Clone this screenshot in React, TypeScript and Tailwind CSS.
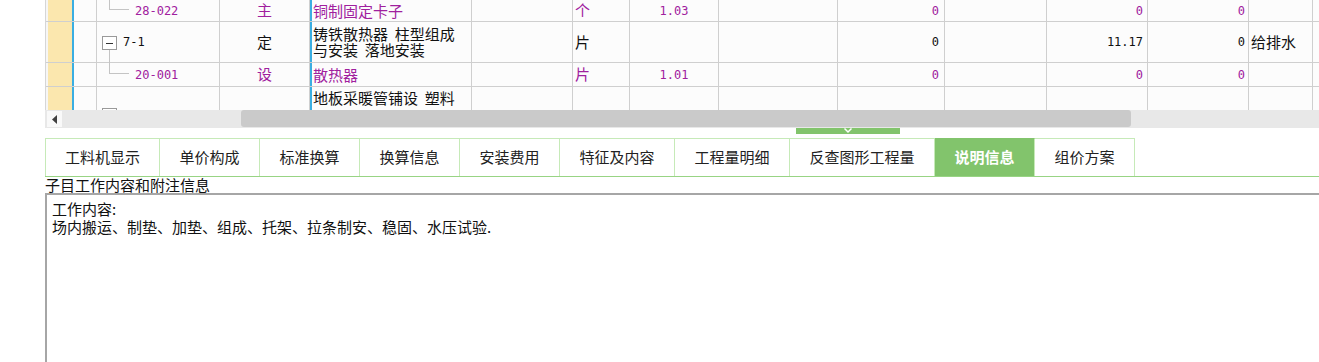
// Quota grid (clipped) with horizontal scrollbar, splitter handle, detail tabs and
// the "说明信息" panel showing the work content of the selected item.

const CJK = { fontFamily: '"Noto Sans CJK SC", "Noto Sans", sans-serif' };
const MONO = { fontFamily: '"DejaVu Sans Mono", "Liberation Mono", monospace' };

// column widths, each including its 1px right border
const W = [23, 123, 91, 160, 101, 57, 89, 119, 107, 102, 101, 101, 64];

type Row = {
  h: number;
  purple: boolean;
  code: string;
  tree: "childTop" | "parent" | "childBottom" | "parentNext";
  type: string;
  name: React.ReactNode;
  nameTop?: boolean;
  unit: string;
  qty: string;
  c9: string;
  c11: string;
  c12: string;
  c13: string;
};

const ROWS: Row[] = [
  { h: 22, purple: true, code: "28-022", tree: "childTop", type: "主", name: "铜制固定卡子", unit: "个", qty: "1.03", c9: "0", c11: "0", c12: "0", c13: "" },
  {
    h: 41, purple: false, code: "7-1", tree: "parent", type: "定",
    name: (<>铸铁散热器&nbsp;&nbsp;柱型组成<br />与安装&nbsp;&nbsp;落地安装</>),
    unit: "片", qty: "", c9: "0", c11: "11.17", c12: "0", c13: "给排水",
  },
  { h: 24, purple: true, code: "20-001", tree: "childBottom", type: "设", name: "散热器", unit: "片", qty: "1.01", c9: "0", c11: "0", c12: "0", c13: "" },
  {
    h: 41, purple: false, code: "", tree: "parentNext", type: "",
    name: (<>地板采暖管铺设&nbsp;&nbsp;塑料</>), nameTop: true,
    unit: "", qty: "", c9: "", c11: "", c12: "", c13: "",
  },
];

const TABS = ["工料机显示", "单价构成", "标准换算", "换算信息", "安装费用", "特征及内容", "工程量明细", "反查图形工程量", "说明信息", "组价方案"];
const TAB_W = [115, 100, 100, 100, 100, 115, 115, 145, 100, 100];

function MinusBox() {
  return (
    <div className="w-[15px] h-[14px] border border-[#9a9a9a] bg-white flex items-center justify-center">
      <div className="w-[7px] h-px bg-[#333]" />
    </div>
  );
}

function TreeCell({ row }: { row: Row }) {
  const color = row.purple ? "text-[#a0209e]" : "text-[#111]";
  return (
    <div className="relative h-full border-r border-[#cfcfcf]" style={{ width: W[1] }}>
      {row.tree === "childTop" && (
        <>
          <div className="absolute left-[12px] top-0 h-[10px] w-px bg-[#c4c4c4]" />
          <div className="absolute left-[12px] top-[9px] w-[20px] h-px bg-[#c4c4c4]" />
        </>
      )}
      {row.tree === "parent" && (
        <>
          <div className="absolute left-[5px] top-[14px]"><MinusBox /></div>
          <div className="absolute left-[12px] top-[28px] bottom-[-1px] w-px bg-[#c4c4c4]" />
        </>
      )}
      {row.tree === "childBottom" && (
        <>
          <div className="absolute left-[12px] top-0 h-[11px] w-px bg-[#c4c4c4]" />
          <div className="absolute left-[12px] top-[10px] w-[20px] h-px bg-[#c4c4c4]" />
        </>
      )}
      {row.tree === "parentNext" && (
        <div className="absolute left-[5px] top-[21px]"><MinusBox /></div>
      )}
      {row.code && (
        <div
          className={`absolute inset-y-0 flex items-center text-[12px] ${color} ${row.tree === "parent" ? "left-[26px]" : "left-[38px]"}`}
          style={MONO}
        >
          {row.code}
        </div>
      )}
    </div>
  );
}

function GridRow({ row }: { row: Row }) {
  const color = row.purple ? "text-[#a0209e]" : "text-[#111]";
  const cell = "h-full border-r border-[#cfcfcf] flex items-center shrink-0";
  return (
    <div className="flex border-b border-[#cfcfcf] shrink-0" style={{ height: row.h }}>
      <div className="w-[2px] h-full bg-[#f6f6f6]" />
      <div className="w-[24px] h-full bg-[#fbe7ae]" />
      <div className="w-[2px] h-full bg-[#3aaee2]" />
      <div className={cell} style={{ width: W[0] }} />
      <TreeCell row={row} />
      <div className={`${cell} justify-center text-[15px] ${color}`} style={{ width: W[2] - 1, ...CJK }}>{row.type}</div>
      <div className="w-[2px] h-full bg-[#3aaee2] shrink-0" />
      <div
        className={`${cell} px-[1px] text-[15px] leading-[16px] ${color} ${row.nameTop ? "items-start pt-[3px]" : ""}`}
        style={{ width: W[3], ...CJK }}
      >
        <div className="whitespace-nowrap">{row.name}</div>
      </div>
      <div className={cell} style={{ width: W[4] }} />
      <div className={`${cell} pl-[2px] text-[15px] ${color}`} style={{ width: W[5], ...CJK }}>{row.unit}</div>
      <div className={`${cell} justify-center text-[12px] ${color}`} style={{ width: W[6], ...MONO }}>{row.qty}</div>
      <div className={cell} style={{ width: W[7] }} />
      <div className={`${cell} justify-end pr-[5px] text-[12px] ${color}`} style={{ width: W[8], ...MONO }}>{row.c9}</div>
      <div className={cell} style={{ width: W[9] }} />
      <div className={`${cell} justify-end pr-[4px] text-[12px] ${color}`} style={{ width: W[10], ...MONO }}>{row.c11}</div>
      <div className={`${cell} justify-end pr-[3px] text-[12px] ${color}`} style={{ width: W[11], ...MONO }}>{row.c12}</div>
      <div className={`${cell} pl-[2px] text-[15px] ${color}`} style={{ width: W[12], ...CJK }}>{row.c13}</div>
      <div className="flex-1 h-full" />
    </div>
  );
}

export default function App() {
  return (
    <div className="w-[1319px] h-[362px] bg-white overflow-hidden flex" style={CJK}>
      <div className="w-[45px] shrink-0 bg-white" />
      <div className="flex-1 flex flex-col min-w-0">
        {/* grid */}
        <div className="h-[110px] overflow-hidden bg-[#fcfcfc] border-l border-[#d6d6d6] flex flex-col">
          {ROWS.map((r, i) => (
            <GridRow key={i} row={r} />
          ))}
        </div>

        {/* horizontal scrollbar */}
        <div className="h-[18px] bg-[#e8e8e8] flex items-center shrink-0">
          <div className="ml-[2px] w-[15px] h-[16px] bg-[#f9f9f9] flex items-center justify-center">
            <svg width="6" height="9" viewBox="0 0 6 9">
              <path d="M5 0 L0 4.5 L5 9 Z" fill="#404040" />
            </svg>
          </div>
          <div className="ml-[179px] w-[890px] h-[17px] self-start bg-[#cacaca] rounded-[3px]" />
        </div>

        {/* splitter handle */}
        <div className="h-[10px] shrink-0">
          <div className="ml-[751px] w-[104px] h-[6px] bg-[#82c46c] flex justify-center">
            <svg width="10" height="6" viewBox="0 0 10 6">
              <path d="M1.5 0.5 L5 4 L8.5 0.5" stroke="#ffffff" strokeWidth="1.5" fill="none" />
            </svg>
          </div>
        </div>

        {/* tabs */}
        <div className="h-[39px] flex border-b border-[#98d484] shrink-0">
          {TABS.map((t, i) => {
            const active = t === "说明信息";
            return (
              <div
                key={t}
                className={`h-full flex items-center justify-center text-[15px] border-t border-r border-[#c6eab8] ${i === 0 ? "border-l" : ""} ${
                  active ? "bg-[#82c46c] text-white font-bold border-t-[#82c46c]" : "bg-white text-[#222]"
                }`}
                style={{ width: TAB_W[i] }}
              >
                {t}
              </div>
            );
          })}
        </div>

        {/* description panel */}
        <div className="h-[16px] text-[15px] leading-[16px] text-[#111] shrink-0 whitespace-nowrap">子目工作内容和附注信息</div>
        <div className="flex-1 border-t-2 border-l-2 border-[#a6a6a6] pl-[5px] pt-[5px] text-[15px] leading-[18px] text-[#111]">
          <div>工作内容:</div>
          <div>场内搬运、制垫、加垫、组成、托架、拉条制安、稳固、水压试验.</div>
        </div>
      </div>
    </div>
  );
}
